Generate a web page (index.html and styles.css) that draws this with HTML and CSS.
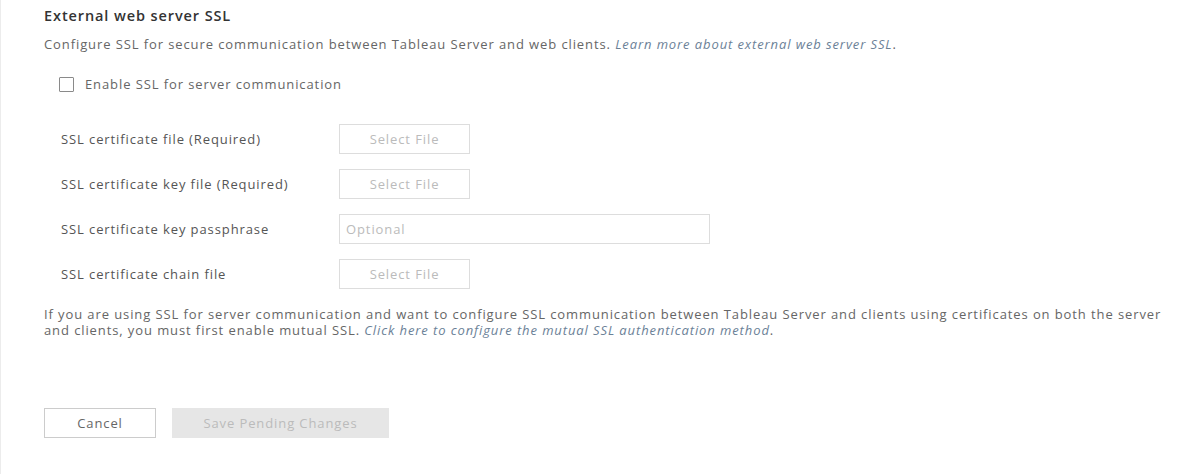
FILE: index.html
```html
<!DOCTYPE html>
<html>
<head>
<meta charset="utf-8">
<link rel="stylesheet" href="styles.css">
</head>
<body>
<div class="page">
  <h2 class="title">External web server SSL</h2>
  <p class="desc">Configure SSL for secure communication between Tableau Server and web clients. <a class="link">Learn more about external web server SSL</a>.</p>
  <label class="check"><span class="box"></span>Enable SSL for server communication</label>
  <div class="form">
    <div class="row"><span class="lbl">SSL certificate file (Required)</span><span class="btn file">Select File</span></div>
    <div class="row"><span class="lbl">SSL certificate key file (Required)</span><span class="btn file">Select File</span></div>
    <div class="row"><span class="lbl">SSL certificate key passphrase</span><span class="input">Optional</span></div>
    <div class="row"><span class="lbl">SSL certificate chain file</span><span class="btn file">Select File</span></div>
  </div>
  <p class="note"><span class="line">If you are using SSL for server communication and want to configure SSL communication between Tableau Server and clients using certificates on both the server</span><span class="line">and clients, you must first enable mutual SSL. <a class="link">Click here to configure the mutual SSL authentication method</a>.</span></p>
  <div class="actions">
    <span class="btn cancel">Cancel</span>
    <span class="btn save">Save Pending Changes</span>
  </div>
</div>
</body>
</html>
```
FILE: styles.css
```css
html, body { margin: 0; padding: 0; background: #fff; }
body { font-family: "Open Sans", Lato, sans-serif; color: #666; font-size: 13px; letter-spacing: 0.9px; }
.page {
  width: 1204px; height: 474px; box-sizing: border-box;
  border-left: 1px solid #ececec;
  padding: 7px 0 0 43px;
}
.title { margin: 0; font-size: 14.5px; font-weight: 600; color: #333; line-height: 18px; letter-spacing: 0.9px; }
.desc { margin: 11px 0 0; line-height: 16px; }
.link { color: #6b8197; font-style: italic; display: inline-block; line-height: 16px; }
.check { display: flex; align-items: center; margin: 24px 0 0 15px; line-height: 16px; }
.box { width: 13px; height: 13px; border: 1px solid #8a8a8a; border-radius: 1px; margin-right: 11px; }
.form { margin-top: 32px; margin-left: 17px; display: flex; flex-direction: column; gap: 15px; }
.row { display: flex; align-items: center; height: 30px; }
.lbl { width: 278px; color: #555; }
.btn { display: flex; align-items: center; justify-content: center; box-sizing: border-box; height: 30px; }
.file { width: 131px; border: 1px solid #ddd; color: #bbb; }
.input { width: 371px; height: 30px; box-sizing: border-box; border: 1px solid #ddd; color: #bbb; display: flex; align-items: center; padding-left: 6px; }
.note { margin: 17px 0 0; line-height: 16px; color: #666; display: flex; flex-direction: column; }
.line { display: block; height: 16px; white-space: nowrap; }
.actions { display: flex; gap: 16px; margin-top: 70px; }
.cancel { width: 112px; border: 1px solid #ccc; color: #666; }
.save { width: 217px; background: #e6e6e6; color: #bbb; }
```
